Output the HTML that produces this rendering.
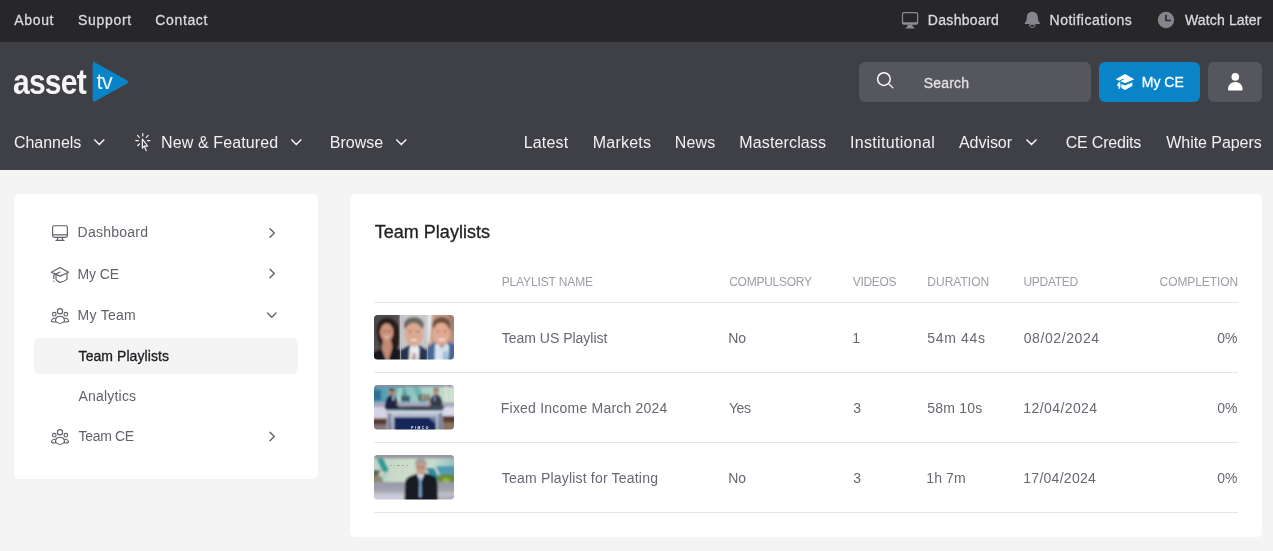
<!DOCTYPE html>
<html lang="en">
<head>
<meta charset="utf-8">
<title>Team Playlists</title>
<style>
*{box-sizing:border-box;margin:0;padding:0}
html,body{width:1273px;height:551px;overflow:hidden;background:#f4f4f5;font-family:"Liberation Sans",sans-serif;}
.t{position:absolute;white-space:nowrap;line-height:1;font-family:"Liberation Sans",sans-serif}
.b{position:absolute}
#topbar{position:absolute;left:0;top:0;width:1273px;height:42px;background:#27272a}
#header{position:absolute;left:0;top:42px;width:1273px;height:128px;background:#3f3f46}
.card{position:absolute;background:#fff;border-radius:5px}
.ln{position:absolute;left:374px;width:864px;height:1px;background:#e4e4e7}
svg{position:absolute;left:0;top:0;overflow:visible;pointer-events:none}
</style>
</head>
<body>
<div id="topbar"></div>
<div id="header"></div>
<!-- search / buttons -->
<div class="b" style="left:859px;top:62px;width:232px;height:40px;background:#56575e;border-radius:6px"></div>
<div class="b" style="left:1099px;top:62px;width:101px;height:40px;background:#0a84c8;border-radius:6px"></div>
<div class="b" style="left:1208px;top:62px;width:54px;height:40px;background:#56575e;border-radius:6px"></div>
<!-- sidebar -->
<div class="card" style="left:14px;top:194px;width:304px;height:285px"></div>
<div class="b" style="left:34px;top:338px;width:264px;height:36px;background:#f4f4f5;border-radius:6px"></div>
<!-- main card -->
<div class="card" style="left:350px;top:194px;width:912px;height:343px"></div>
<div class="ln" style="top:302px"></div>
<div class="ln" style="top:372px"></div>
<div class="ln" style="top:442px"></div>
<div class="ln" style="top:512px"></div>
<!-- logo -->
<svg width="1273" height="551" viewBox="0 0 1273 551"><path d="M94.6 62.3 L127 80.2 Q129.2 81.9 127 83.6 L94.8 101.4 Q92.7 102.3 92.7 100 L92.7 63.8 Q92.7 61.4 94.6 62.3Z" fill="#0a84c8"/></svg>
<div id="tx" style="position:absolute;left:0;top:0;width:1273px;height:551px;will-change:transform">
<div class="t" id="asset" style="left:13px;top:70.2px;font-size:30px;font-weight:bold;color:#f5f5f5;letter-spacing:-0.75px;transform-origin:0 100%;transform:scaleY(1.17)">asset</div>
<div class="t" id="tv" style="left:96.6px;top:70.7px;font-size:22px;color:rgba(255,255,255,.9);letter-spacing:-1px">tv</div>
<div class="t" style="left:14.20px;top:13.15px;font-size:14px;color:#dadade;letter-spacing:0.676px;-webkit-text-stroke:0.3px currentColor;">About</div>
<div class="t" style="left:78.00px;top:13.15px;font-size:14px;color:#dadade;letter-spacing:0.693px;-webkit-text-stroke:0.3px currentColor;">Support</div>
<div class="t" style="left:155.30px;top:13.15px;font-size:14px;color:#dadade;letter-spacing:0.640px;-webkit-text-stroke:0.3px currentColor;">Contact</div>
<div class="t" style="left:927.80px;top:13.15px;font-size:14px;color:#dadade;letter-spacing:0.312px;-webkit-text-stroke:0.3px currentColor;">Dashboard</div>
<div class="t" style="left:1049.60px;top:13.15px;font-size:14px;color:#dadade;letter-spacing:0.495px;-webkit-text-stroke:0.3px currentColor;">Notifications</div>
<div class="t" style="left:1185.00px;top:13.15px;font-size:14px;color:#dadade;letter-spacing:0.141px;-webkit-text-stroke:0.3px currentColor;">Watch Later</div>
<div class="t" style="left:923.80px;top:76.15px;font-size:14px;color:#e0e0e3;letter-spacing:0.186px;-webkit-text-stroke:0.3px currentColor;">Search</div>
<div class="t" style="left:1141.70px;top:75.45px;font-size:14px;color:#ffffff;letter-spacing:0.034px;-webkit-text-stroke:0.3px currentColor;">My CE</div>
<div class="t" style="left:14.00px;top:135.46px;font-size:16px;color:#f1f1f3;letter-spacing:-0.043px;">Channels</div>
<div class="t" style="left:161.00px;top:135.46px;font-size:16px;color:#f1f1f3;letter-spacing:0.122px;">New &amp; Featured</div>
<div class="t" style="left:329.70px;top:135.46px;font-size:16px;color:#f1f1f3;letter-spacing:0.029px;">Browse</div>
<div class="t" style="left:523.70px;top:135.46px;font-size:16px;color:#f1f1f3;letter-spacing:0.172px;">Latest</div>
<div class="t" style="left:592.70px;top:135.46px;font-size:16px;color:#f1f1f3;letter-spacing:0.234px;">Markets</div>
<div class="t" style="left:674.70px;top:135.46px;font-size:16px;color:#f1f1f3;letter-spacing:0.197px;">News</div>
<div class="t" style="left:739.30px;top:135.46px;font-size:16px;color:#f1f1f3;letter-spacing:0.135px;">Masterclass</div>
<div class="t" style="left:850.00px;top:135.46px;font-size:16px;color:#f1f1f3;letter-spacing:0.326px;">Institutional</div>
<div class="t" style="left:959.00px;top:135.46px;font-size:16px;color:#f1f1f3;letter-spacing:-0.054px;">Advisor</div>
<div class="t" style="left:1065.70px;top:135.46px;font-size:16px;color:#f1f1f3;letter-spacing:-0.195px;">CE Credits</div>
<div class="t" style="left:1166.30px;top:135.46px;font-size:16px;color:#f1f1f3;letter-spacing:-0.058px;">White Papers</div>
<div class="t" style="left:77.60px;top:225.25px;font-size:14px;color:#61626b;letter-spacing:0.237px;">Dashboard</div>
<div class="t" style="left:77.60px;top:266.55px;font-size:14px;color:#61626b;letter-spacing:-0.141px;">My CE</div>
<div class="t" style="left:77.60px;top:308.15px;font-size:14px;color:#61626b;letter-spacing:0.246px;">My Team</div>
<div class="t" style="left:78.60px;top:349.05px;font-size:14px;color:#1b1b1f;letter-spacing:0.064px;-webkit-text-stroke:0.3px currentColor;">Team Playlists</div>
<div class="t" style="left:78.60px;top:388.95px;font-size:14px;color:#61626b;letter-spacing:0.185px;">Analytics</div>
<div class="t" style="left:78.60px;top:428.95px;font-size:14px;color:#61626b;letter-spacing:-0.339px;">Team CE</div>
<div class="t" style="left:374.70px;top:222.76px;font-size:18px;color:#222226;letter-spacing:0.021px;-webkit-text-stroke:0.3px currentColor;">Team Playlists</div>
<div class="t" style="left:501.70px;top:275.84px;font-size:12px;color:#9c9da6;letter-spacing:-0.128px;">PLAYLIST NAME</div>
<div class="t" style="left:729.20px;top:275.84px;font-size:12px;color:#9c9da6;letter-spacing:-0.259px;">COMPULSORY</div>
<div class="t" style="left:852.80px;top:275.84px;font-size:12px;color:#9c9da6;letter-spacing:-0.328px;">VIDEOS</div>
<div class="t" style="left:927.30px;top:275.84px;font-size:12px;color:#9c9da6;letter-spacing:0.013px;">DURATION</div>
<div class="t" style="left:1023.50px;top:275.84px;font-size:12px;color:#9c9da6;letter-spacing:-0.314px;">UPDATED</div>
<div class="t" style="left:1159.60px;top:275.84px;font-size:12px;color:#9c9da6;letter-spacing:-0.086px;">COMPLETION</div>
<div class="t" style="left:501.80px;top:331.35px;font-size:14px;color:#666771;letter-spacing:-0.014px;">Team US Playlist</div>
<div class="t" style="left:728.20px;top:331.35px;font-size:14px;color:#666771;letter-spacing:0.000px;">No</div>
<div class="t" style="left:852.30px;top:331.35px;font-size:14px;color:#666771;letter-spacing:0.000px;">1</div>
<div class="t" style="left:927.30px;top:331.35px;font-size:14px;color:#666771;letter-spacing:0.667px;">54m 44s</div>
<div class="t" style="left:1023.70px;top:331.35px;font-size:14px;color:#666771;letter-spacing:0.591px;">08/02/2024</div>
<div class="t" style="left:1217.30px;top:331.35px;font-size:14px;color:#666771;letter-spacing:0.000px;">0%</div>
<div class="t" style="left:500.80px;top:401.25px;font-size:14px;color:#666771;letter-spacing:0.215px;">Fixed Income March 2024</div>
<div class="t" style="left:728.90px;top:401.25px;font-size:14px;color:#666771;letter-spacing:-0.319px;">Yes</div>
<div class="t" style="left:853.30px;top:401.25px;font-size:14px;color:#666771;letter-spacing:0.000px;">3</div>
<div class="t" style="left:927.30px;top:401.25px;font-size:14px;color:#666771;letter-spacing:0.217px;">58m 10s</div>
<div class="t" style="left:1023.30px;top:401.25px;font-size:14px;color:#666771;letter-spacing:0.413px;">12/04/2024</div>
<div class="t" style="left:1217.30px;top:401.25px;font-size:14px;color:#666771;letter-spacing:0.000px;">0%</div>
<div class="t" style="left:501.80px;top:471.25px;font-size:14px;color:#666771;letter-spacing:0.194px;">Team Playlist for Teating</div>
<div class="t" style="left:728.20px;top:471.25px;font-size:14px;color:#666771;letter-spacing:0.000px;">No</div>
<div class="t" style="left:853.30px;top:471.25px;font-size:14px;color:#666771;letter-spacing:0.000px;">3</div>
<div class="t" style="left:926.30px;top:471.25px;font-size:14px;color:#666771;letter-spacing:0.113px;">1h 7m</div>
<div class="t" style="left:1023.30px;top:471.25px;font-size:14px;color:#666771;letter-spacing:0.269px;">17/04/2024</div>
<div class="t" style="left:1217.30px;top:471.25px;font-size:14px;color:#666771;letter-spacing:0.000px;">0%</div></div>
<svg width="1273" height="551" viewBox="0 0 1273 551" fill="none">
<!-- topbar monitor -->
<g fill="#8b8b94" transform="translate(0 .3)"><path fill-rule="evenodd" d="M903.600 11.700h12.900a1.700 1.700 0 0 1 1.700 1.700v9.400a1.700 1.700 0 0 1 -1.700 1.700h-12.900a1.700 1.700 0 0 1 -1.700 -1.700v-9.400a1.700 1.700 0 0 1 1.700 -1.700zM904 12.900a.9.900 0 0 0 -.9.900v7.200a.9.900 0 0 0 .9.900h12.100a.9.900 0 0 0 .9-.9v-7.200a.9.900 0 0 0 -.9-.9z"/><path d="M907.900 24.500h4.300l1.200 2.600h1.100v1h-8.900v-1h1.100z"/></g>
<!-- bell -->
<g fill="#85858e"><path d="M1032.300 11.800c3.300 0 5.500 2.400 5.500 5.400c0 3.300 1 4.500 2.100 5.900c.3.500 0 .9-.5.900h-14.200c-.5 0-.8-.4-.5-.9c1.100-1.400 2.100-2.600 2.100-5.900c0-3 2.200-5.400 5.500-5.400z"/><path d="M1029.400 24.600a2.900 3 0 0 0 5.800 0z" stroke="#85858e" stroke-width="1" fill="none"/></g>
<!-- clock -->
<circle cx="1166" cy="20" r="8.200" fill="#84848d"/><path d="M1166 15.200v5.300h4" stroke="#27272a" stroke-width="1.600" stroke-linecap="round" stroke-linejoin="round"/>
<!-- search icon -->
<circle cx="883.900" cy="79.100" r="6.300" stroke="#fafafa" stroke-width="1.500"/><path d="M888.600 83.700l4.200 4.100" stroke="#f1f1f3" stroke-width="1.300" stroke-linecap="round"/>
<!-- my ce cap (solid) -->
<g fill="#ffffff"><path d="M1125 74.100l9.300 5.100l-9.300 4.100l-4.600-2l3.600-2l-.5-.8l-4.300 2.300l-3.500-1.600z"/><path d="M1121.400 84l3.600 1.500l7.300-3.100v3.700l-7.300 3.800l-3.600-1.800z"/><path d="M1118.600 82.500l1.500-.7l.5 4.500l-.8 2.500l-1.300.2l.3-2.800l-1.200.4l-.3-2.200z"/></g>
<!-- user (solid) -->
<g fill="#ffffff"><circle cx="1235.300" cy="76.900" r="3.800"/><path d="M1228 89.600c0-4.700 3-7.700 7.300-7.700s7.300 3 7.300 7.700c0 .6-.4.900-.9.900h-12.800c-.5 0-.9-.3-.9-.9z"/></g>
<!-- nav chevrons -->
<g stroke="#f1f1f3" stroke-width="1.500" stroke-linecap="round" stroke-linejoin="round"><path d="M94.800 139.900l4.500 4.700l4.500-4.700"/><path d="M291.800 139.900l4.500 4.700l4.500-4.700"/><path d="M396.800 139.900l4.500 4.700l4.500-4.700"/><path d="M1027 139.900l4.500 4.700l4.500-4.700"/></g>
<!-- nav cursor rays -->
<g stroke="#f4f4f5" stroke-width="1.200" stroke-linecap="round" stroke-linejoin="round"><path d="M142.800 133.600v2.400M137.500 135.400l1.900 1.900M148.200 135.400l-1.900 1.900M135.800 140.600h2.600M147.400 140.600h2.500M137.600 145.700l1.900-1.700"/><path d="M142.400 139.200v8.900l1.900-2l1.900 4.500M144.300 146.100l3.300-.1z M142.400 139.200l5.200 6.800"/></g>
<!-- sidebar icons -->
<g stroke="#60616a" stroke-width="1.150" stroke-linecap="round" stroke-linejoin="round">
<rect x="52.600" y="225.700" width="14.800" height="11.700" rx="1.800"/><path d="M52.600 234.900h14.800M58 237.600l-.9 2.700M62 237.600l.9 2.700M56 240.400h8"/>
<g id="cap"><path d="M60 267.500l8.600 4.800l-8.600 3.800l-8.600-3.800z"/><path d="M56 275v4.400c1 1.600 2.400 2.600 4 3c1.600-.4 5.200-1.700 7-3v-5.700"/><path d="M60 272l-6.200 2.900v3.700"/><path d="M54 281.100v.2" /></g>
<g id="team"><circle cx="60" cy="311.300" r="2.600"/><circle cx="54.300" cy="314.200" r="1.800"/><circle cx="65.800" cy="314.200" r="1.800"/><path d="M55.500 321c0-3 2-4.800 4.500-4.800s4.500 1.800 4.500 4.800c-1.200 1.600-2.800 2.500-4.500 2.500s-3.300-.9-4.500-2.500z"/><path d="M55.300 318.300c-2-.4-3.700.9-3.900 2.900c1.200.7 2.700 1 4.200.7"/><path d="M64.700 318.300c2-.4 3.700.9 3.900 2.900c-1.200.7-2.700 1-4.200.7"/></g>
<use href="#team" y="121"/>
</g>
<!-- sidebar chevrons -->
<g stroke="#60616a" stroke-width="1.400" stroke-linecap="round" stroke-linejoin="round"><path d="M270 228.800l4.300 4.200l-4.300 4.200"/><path d="M270 269.300l4.300 4.200l-4.300 4.200"/><path d="M267.600 312.900l4.200 4.300l4.200-4.300"/><path d="M270 432.300l4.300 4.200l-4.300 4.200"/></g>
</svg>
<!-- thumbnails (approximated photos) -->
<svg style="left:374px;top:315px" width="80" height="45" viewBox="0 0 80 45">
<defs><clipPath id="c1"><rect width="80" height="44.500" rx="3.500"/></clipPath><filter id="bl" x="-10%" y="-10%" width="120%" height="120%"><feGaussianBlur stdDeviation="0.800"/></filter>
<linearGradient id="g1a" x1="0" y1="0" x2="1" y2="1"><stop offset="0" stop-color="#46474d"/><stop offset="1" stop-color="#625c58"/></linearGradient>
<linearGradient id="g1c" x1="0" y1="0" x2="1" y2="0"><stop offset="0" stop-color="#c7a592"/><stop offset="1" stop-color="#b68c7a"/></linearGradient></defs>
<g clip-path="url(#c1)"><g filter="url(#bl)">
<rect x="-2" y="-2" width="28.500" height="49" fill="url(#g1a)"/>
<path d="M12.500 2.500c-6 0-9.500 5-9.800 12c-.3 6 1 10 2.500 14l2 6h15.500c2.500-4 3.500-9 3.300-16c-.2-9-4.500-16-13.500-16z" fill="#2a1d1f"/>
<path d="M9 25l-1.500 9l4.500 11h3l3.500-12l-1.500-8z" fill="#c08a73"/>
<ellipse cx="12.700" cy="17.300" rx="6.600" ry="9" fill="#cd937b"/>
<path d="M-2 47v-9l9.500-4.500l5 13.500zM28 47v-12l-9.500-2.500l-4.500 14.500z" fill="#16171c"/><ellipse cx="10.200" cy="16" rx="1.300" ry=".600" fill="#5a3a32"/><ellipse cx="15.400" cy="16" rx="1.300" ry=".600" fill="#5a3a32"/><ellipse cx="12.900" cy="22" rx="2.400" ry=".800" fill="#ecd6cc"/>
<rect x="26.300" y="-2" width="27.200" height="49" fill="#c5c6ca"/>
<ellipse cx="39.800" cy="10" rx="10" ry="8" fill="#6f655f"/>
<ellipse cx="39.800" cy="19.500" rx="9.300" ry="11.500" fill="#dba991"/>
<ellipse cx="39.800" cy="25" rx="3.300" ry="1" fill="#f0e0d8"/><ellipse cx="36" cy="16.600" rx="1.600" ry=".650" fill="#6a4a40"/><ellipse cx="43.800" cy="16.600" rx="1.600" ry=".650" fill="#6a4a40"/>
<path d="M26.300 47v-12l9-5l5 6l5-6l8.200 5v12z" fill="#28354f"/>
<path d="M35 47l.5-14l2.500-3l2 3.500l2.500-3.500l3 3.500l-1 13.500z" fill="#eeeef0"/>
<path d="M37 47l1.500-9h3l1.300 9z" fill="#bca59f"/>
<rect x="53.300" y="-2" width="29" height="49" fill="url(#g1c)"/>
<path d="M53.300 -2h4.700l-2.500 30h-2.200z" fill="#e6eaee"/>
<ellipse cx="67.500" cy="10" rx="9" ry="8" fill="#70503d"/>
<ellipse cx="67.300" cy="18.800" rx="8.600" ry="11" fill="#e2ab91"/>
<ellipse cx="67.800" cy="24.500" rx="3.300" ry="1.100" fill="#f5e8e2"/><ellipse cx="63.800" cy="16.300" rx="1.500" ry=".650" fill="#6b4a3c"/><ellipse cx="71" cy="16.300" rx="1.500" ry=".650" fill="#6b4a3c"/><path d="M74 -2h9v18h-6z" fill="#a57f6d"/>
<path d="M53.300 47v-15l8-5l6 8l7-8l8 3v17z" fill="#46689a"/>
<path d="M60.500 47l.5-17l2-2l5 6l4.500-6l2.500 3l-1 16z" fill="#d7e3ee"/>
<path d="M68.500 47l1-11h3l1.500 11z" fill="#9bbbd6"/>
</g>
<rect x="26" y="0" width=".600" height="45" fill="#d9dadd"/><rect x="53.100" y="0" width=".500" height="45" fill="#c9ccd4"/>
</g></svg>

<svg style="left:374px;top:385px" width="80" height="45" viewBox="0 0 80 45">
<defs><clipPath id="c2"><rect width="80" height="44.500" rx="3.500"/></clipPath>
<linearGradient id="g2a" x1="0" y1="0" x2="1" y2="0"><stop offset="0" stop-color="#3f8fae"/><stop offset=".28" stop-color="#6fb1b7"/><stop offset=".55" stop-color="#9fcfc6"/><stop offset=".8" stop-color="#bcd9c9"/><stop offset="1" stop-color="#d5e2cf"/></linearGradient>
<linearGradient id="g2d" x1="0" y1="0" x2="1" y2="0"><stop offset="0" stop-color="#486772"/><stop offset=".5" stop-color="#2d3f4c"/><stop offset="1" stop-color="#3b4f5b"/></linearGradient></defs>
<g clip-path="url(#c2)"><g filter="url(#bl)">
<rect x="-2" y="-2" width="84" height="22" fill="url(#g2a)"/>
<rect x="-2" y="-2" width="84" height="3.800" fill="#8d8a9e"/>
<path d="M-2 5h9v10h-9z" fill="#2f6f93"/><path d="M22 2l8 0l7 17h-8z" fill="#4da3a8"/><path d="M38 2h7l8 17h-7z" fill="#6bb7b4"/>
<path d="M24 3h5l-2 14h-5z" fill="#b9d8cb" opacity=".8"/><path d="M27 10.800h9v5.500h-9z" fill="#3c4b52" opacity=".75"/><path d="M44 9.500h12v6.500h-12z" fill="#66574f" opacity=".7"/><path d="M48 10.500h2v4h-2zM52 11h1.500v3h-1.500z" fill="#c9c2b4" opacity=".7"/>
<rect x="71.500" y="0" width="1" height="20" fill="#e8efe6"/>
<rect x="-2" y="17.300" width="84" height="5.500" fill="#aaa7c1"/>
<rect x="-2" y="22" width="17" height="12" fill="#d3d3e3"/><rect x="-2" y="33.500" width="17" height="6.500" fill="#5a3b2f"/><rect x="-2" y="39.500" width="17" height="8" fill="#85767a"/>
<rect x="67" y="22" width="15" height="9.500" fill="#d8d8e7"/><rect x="67" y="31" width="15" height="7" fill="#5f3e2d"/><rect x="67" y="37.500" width="15" height="10" fill="#8a7262"/>
<path d="M13 25h55.500l.500 22h-56.500z" fill="#b2bbcf"/><path d="M13.500 25h54.500v3.200h-54.500z" fill="#d3dae6"/>
<path d="M14 28l2.500 0l2 19h-5zM65 28h3l1 19h-5.500z" fill="#7c8498"/>
<path d="M20.200 32.300h41.800v15h-41.800z" fill="#14265a"/><path d="M54 32.300h8v6z" fill="#7080a6"/>
<path d="M10 21.300h61l-2.500 4.200h-56z" fill="url(#g2d)"/>
<path d="M10.800 24c0-8.500 2.200-13.200 7-14c4.500.6 6.200 5.300 6.700 14z" fill="#1b2344"/>
<circle cx="18" cy="7.200" r="3" fill="#b57e66"/><path d="M15 6.500a3 2.800 0 0 1 6 -.500l-1-.500h-4z" fill="#1d1818"/><rect x="18.600" y="10.500" width="1.300" height="5" fill="#e9e9ef"/>
<path d="M55.500 21.500c0-7 1.700-11.300 6.500-12.200c5 .9 6.500 5.500 6.500 12.200z" fill="#353a48"/>
<circle cx="62" cy="6.400" r="3.100" fill="#bf8e76"/><path d="M59 5.500a3.100 2.800 0 0 1 6.200 0l-1.200-.800h-4z" fill="#6c6c72"/><rect x="59.800" y="10.500" width="1.800" height="5.500" fill="#7b8fb6"/>
<ellipse cx="55" cy="19.300" rx="2.200" ry="1" fill="#c79a84"/><ellipse cx="24" cy="19.300" rx="1.800" ry="1" fill="#b98a74"/>
</g>
<text x="37.200" y="43.500" font-family="Liberation Sans,sans-serif" font-weight="bold" font-size="3.300" letter-spacing="1.550" fill="#ffffff">PIMCO</text>
</g></svg>

<svg style="left:374px;top:455px" width="80" height="45" viewBox="0 0 80 45">
<defs><clipPath id="c3"><rect width="80" height="44.500" rx="3.500"/></clipPath>
<linearGradient id="g3a" x1="0" y1="0" x2="1" y2="0"><stop offset="0" stop-color="#bfd4c4"/><stop offset=".45" stop-color="#cfdccb"/><stop offset=".75" stop-color="#c5d9cd"/><stop offset="1" stop-color="#8fc0c4"/></linearGradient>
<linearGradient id="g3b" x1="0" y1="0" x2="0" y2="1"><stop offset="0" stop-color="#9898a5"/><stop offset=".45" stop-color="#a5a5b2"/><stop offset=".6" stop-color="#c4c4d0"/><stop offset=".8" stop-color="#a9a9b8"/><stop offset="1" stop-color="#bcbccb"/></linearGradient></defs>
<g clip-path="url(#c3)"><g filter="url(#bl)">
<rect x="-2" y="-2" width="84" height="31" fill="url(#g3a)"/>
<rect x="-2" y="-2" width="84" height="5.400" fill="#96969f"/>
<path d="M2.500 3.200h6.500l6 12l-3.500 3l-3.500-2.500z" fill="#2d9c97"/><path d="M11.500 17l3.500-1.800l-5.500 12h-4.500z" fill="#a5cdc2"/><path d="M-2 15h8.500l-3 8h-5.500z" fill="#5b6b5b"/><path d="M-2 21h9l2 6h-11z" fill="#8d8772"/>
<path d="M52 13h8l6 12h-8z" fill="#2a8ba2"/><path d="M62 11h20v9h-16z" fill="#4f9db3"/>
<path d="M63 21c5-2 12-2.500 19-1v9.500h-17z" fill="#6c8b32"/><ellipse cx="72" cy="25" rx="4" ry="2" fill="#9ab243"/>
<rect x="-2" y="27" width="84" height="20" fill="url(#g3b)"/>
<path d="M-2 40h32v7h-32z" fill="#cbcbd9"/>
<path d="M30.500 47l.5-19c.5-4 2.500-6 5.500-7l6.500-2.500h10l6.500 2.500c3 1.200 4 3.500 4 6.500l.500 19.500z" fill="#171b24"/>
<path d="M42.700 18.500l3.800 9l4-9z" fill="#e6eaf0"/>
<path d="M45.500 21.300h1.600l.500 20l-1.300 1.500l-1.200-1.500z" fill="#86b1db"/>
<ellipse cx="46.800" cy="8.200" rx="5.800" ry="4.700" fill="#9b9b98"/>
<ellipse cx="46.900" cy="13.400" rx="5.100" ry="6.500" fill="#c69c86"/>
<rect x="42.800" y="11.800" width="8.200" height=".800" fill="#5b4c48" opacity=".8"/>
</g>
<text x="16.200" y="10.800" font-family="Liberation Sans,sans-serif" font-weight="bold" font-size="2.400" letter-spacing="2.550" fill="#3c4946" opacity=".8">PIMCO</text>
</g></svg>
</body></html>
